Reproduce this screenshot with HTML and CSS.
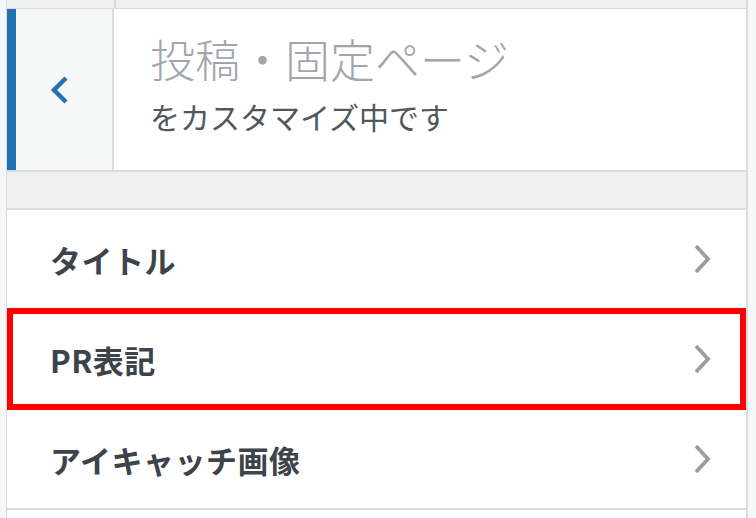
FILE: index.html
```html
<!DOCTYPE html>
<html lang="ja">
<head>
<meta charset="utf-8">
<title>Customizer</title>
<link rel="stylesheet" href="styles.css">
</head>
<body>
<div class="frame">
  <div class="topstrip"><div class="topstrip-cell"></div></div>
  <div class="header">
    <div class="accent"></div>
    <div class="back">
      <svg width="20" height="30" viewBox="0 0 20 30"><polyline points="16,3 4,15 16,27" fill="none" stroke="#2271b1" stroke-width="4.4" stroke-linecap="butt" stroke-linejoin="miter"/></svg>
    </div>
    <div class="heading">
      <div class="title">投稿・固定ページ</div>
      <div class="subtitle">をカスタマイズ中です</div>
    </div>
  </div>
  <div class="spacer"></div>
  <ul class="sections">
    <li class="section"><span class="label">タイトル</span><svg class="chev" width="20" height="32" viewBox="0 0 20 32"><polyline points="4,3 16,16 4,29" fill="none" stroke="#9a9da2" stroke-width="3.8"/></svg></li>
    <li class="section highlight"><span class="label">PR表記</span><svg class="chev" width="20" height="32" viewBox="0 0 20 32"><polyline points="4,3 16,16 4,29" fill="none" stroke="#9a9da2" stroke-width="3.8"/></svg></li>
    <li class="section"><span class="label">アイキャッチ画像</span><svg class="chev" width="20" height="32" viewBox="0 0 20 32"><polyline points="4,3 16,16 4,29" fill="none" stroke="#9a9da2" stroke-width="3.8"/></svg></li>
  </ul>
</div>
</body>
</html>
```
FILE: styles.css
```css
html, body {
  margin: 0;
  padding: 0;
  height: 100%;
}
body {
  background: #f6f7f7;
  font-family: "Noto Sans CJK JP", "Noto Sans", sans-serif;
  overflow: hidden;
}
.frame {
  margin: 0 8px 0 6px;
  height: 518px;
  background: #fff;
  border-left: 1px solid #dcdcde;
  border-right: 2px solid #dcdcde;
  display: flex;
  flex-direction: column;
}
.topstrip {
  height: 8px;
  flex: none;
  background: #f0f0f1;
  border-bottom: 1px solid #dcdcde;
  display: flex;
}
.topstrip-cell {
  width: 107px;
  border-right: 2px solid #dcdcde;
}
.header {
  height: 161px;
  flex: none;
  display: flex;
  border-bottom: 2px solid #dcdcde;
}
.accent {
  width: 9px;
  background: #2271b1;
}
.back {
  width: 98px;
  background: #f6f7f7;
  border-right: 2px solid #dcdcde;
  display: flex;
  align-items: center;
  justify-content: center;
  padding-right: 8px;
  box-sizing: border-box;
}
.heading {
  flex: 1;
  padding: 21px 0 0 36px;
}
.title {
  font-size: 45px;
  line-height: 58px;
  font-weight: 300;
  color: #a2a5aa;
}
.subtitle {
  margin-top: 8px;
  font-size: 30px;
  line-height: 40px;
  color: #50575e;
}
.spacer {
  height: 36px;
  flex: none;
  background: #f0f0f1;
  border-bottom: 2px solid #dcdcde;
}
.sections {
  list-style: none;
  margin: 0;
  padding: 0;
}
.section {
  position: relative;
  height: 98px;
  border-bottom: 2px solid #dcdcde;
  display: flex;
  align-items: center;
  justify-content: space-between;
  padding: 0 34px 0 43px;
}
.label {
  font-size: 31px;
  font-weight: 700;
  color: #3c434a;
  letter-spacing: 0.5px;
}
.highlight::after {
  content: "";
  position: absolute;
  left: 0;
  right: 0;
  top: -2px;
  bottom: -2px;
  border: 6px solid #ff0000;
}
```
